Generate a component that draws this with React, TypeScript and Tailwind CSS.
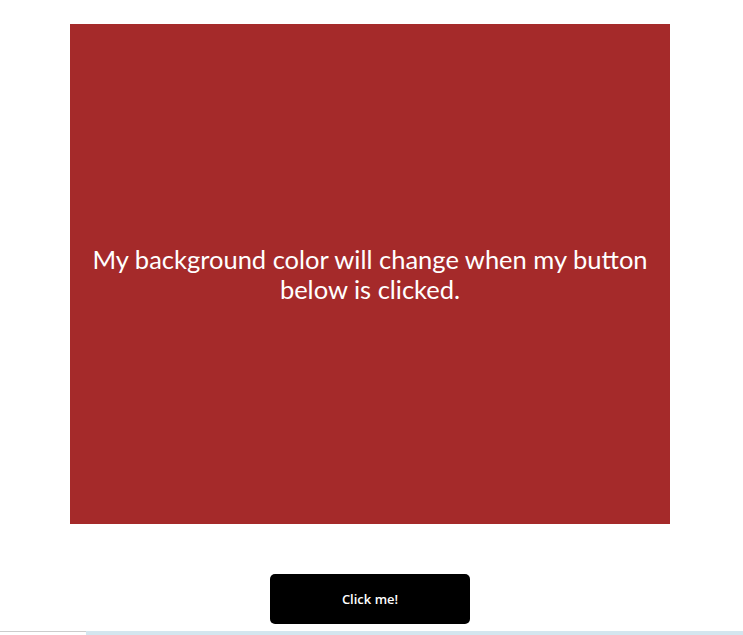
export default function App() {
  return (
    <div className="min-h-[635px] bg-white flex flex-col">
      <div className="w-[740px] flex flex-col items-center pt-6">
        <div className="w-[600px] h-[500px] bg-[#a52a2a] flex items-center justify-center px-5">
          <p className="text-white text-center text-[25.5px] leading-[30px] font-['Lato',sans-serif]">
            My background color will change when my button below is clicked.
          </p>
        </div>
        <button className="mt-[50px] w-[200px] h-[50px] pt-[1px] bg-black rounded-[5px] text-white text-[13px] font-semibold font-['Open_Sans',sans-serif]">
          Click me!
        </button>
      </div>
      <div className="mt-[7px] flex h-[4px]">
        <div className="w-[86px] border-t border-[#cccccc] bg-white" />
        <div className="flex-1 bg-[#d4e6ef]" />
      </div>
    </div>
  );
}
